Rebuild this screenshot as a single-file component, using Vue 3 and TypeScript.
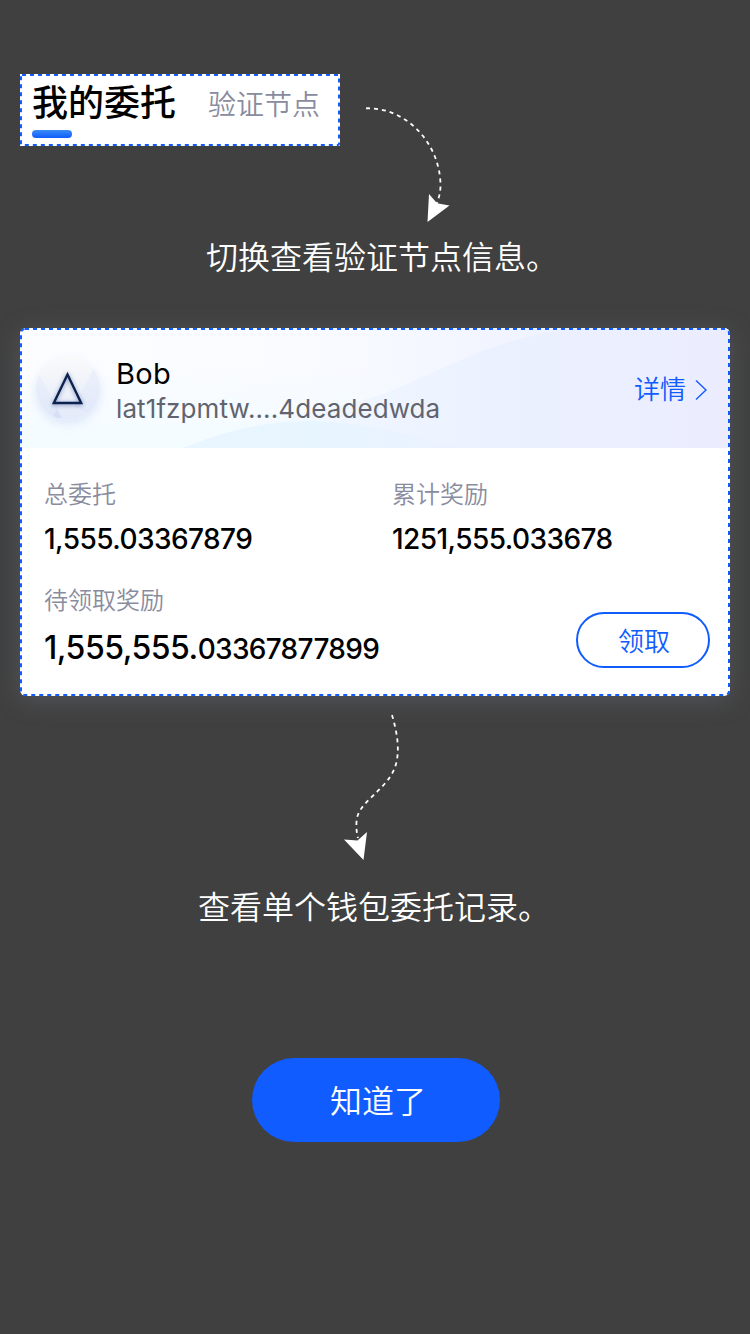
<script setup lang="ts">
interface Stat {
  label: string
  value: string
}

const tabs: string[] = ['我的委托', '验证节点']
const stats: Stat[] = [
  { label: '总委托', value: '1,555.03367879' },
  { label: '累计奖励', value: '1251,555.033678' },
]
const pending = { label: '待领取奖励', whole: '1,555,555.', fraction: '03367877899' }
</script>

<template>
  <main class="guide">
    <nav class="tabs">
      <div class="tab active">
        <span class="tab-text">{{ tabs[0] }}</span>
        <i class="bar"></i>
      </div>
      <div class="tab muted">{{ tabs[1] }}</div>
      <svg class="outline" viewBox="0 0 320 72">
        <rect x="1" y="1" width="318" height="70" rx="1" />
      </svg>
    </nav>

    <svg class="arrow arrow-top" viewBox="0 0 90 120">
      <path class="trail" d="M6 8.3C46 7 80 43 80.500 85C80.500 92 79 98 76.500 104" />
      <path class="head" d="M69 94L77 103.300L89.500 105.500L67.500 122Z" />
    </svg>
    <p class="tip tip-top">切换查看验证节点信息。</p>

    <section class="card">
      <header class="card-head">
        <svg class="wave" viewBox="0 0 710 120" preserveAspectRatio="none">
          <defs>
            <linearGradient id="base" x1="0" y1="0" x2="1" y2="0">
              <stop offset="0" stop-color="#fcfdff" />
              <stop offset="0.4" stop-color="#f9fbff" />
              <stop offset="0.8" stop-color="#eef2ff" />
              <stop offset="1" stop-color="#ebeeff" />
            </linearGradient>
            <linearGradient id="low" x1="0" y1="0" x2="0" y2="1">
              <stop offset="0.3" stop-color="#f3fbff" stop-opacity="0" />
              <stop offset="1" stop-color="#f3fcff" />
            </linearGradient>
            <linearGradient id="hill" gradientUnits="userSpaceOnUse" x1="200" y1="0" x2="710" y2="0">
              <stop offset="0" stop-color="#f1f8ff" stop-opacity="0" />
              <stop offset="0.25" stop-color="#f0f6ff" />
              <stop offset="0.6" stop-color="#ebf0ff" />
              <stop offset="1" stop-color="#ebedff" />
            </linearGradient>
            <linearGradient id="mound" gradientUnits="userSpaceOnUse" x1="163" y1="0" x2="440" y2="0">
              <stop offset="0" stop-color="#e9f6ff" />
              <stop offset="0.5" stop-color="#e7f5ff" />
              <stop offset="1" stop-color="#ebf2ff" />
            </linearGradient>
          </defs>
          <rect width="710" height="120" fill="url(#base)" />
          <rect width="400" height="120" fill="url(#low)" />
          <path d="M200 120V97C250 92 300 83 340 73C375 64 390 53 407 47C440 33 465 18 528 4L550 0H710V120Z" fill="url(#hill)" />
          <path d="M163 120C195 107 235 93 294 93C340 94 390 106 440 120Z" fill="url(#mound)" />
        </svg>
        <svg class="avatar" viewBox="0 0 64 64">
          <defs>
            <linearGradient id="disc" x1="0" y1="0" x2="0" y2="1">
              <stop offset="0" stop-color="#fafafa" />
              <stop offset="1" stop-color="#e3eafa" />
            </linearGradient>
            <linearGradient id="facet" x1="0" y1="0" x2="0" y2="1">
              <stop offset="0" stop-color="#eff2fb" />
              <stop offset="1" stop-color="#dfe7f9" />
            </linearGradient>
            <clipPath id="round"><circle cx="32" cy="32" r="32" /></clipPath>
          </defs>
          <g clip-path="url(#round)">
            <rect width="64" height="64" fill="url(#disc)" />
            <path d="M0 12L4 20L22 53L17 64H0ZM64 6L58 12L38 50L54 58L64 50Z" fill="url(#facet)" />
            <path d="M21 53L26 62H16Z" fill="#d5e0f8" />
          </g>
          <path class="delta" d="M31.500 18.500L45.200 47H17.800Z" />
        </svg>
        <div class="who">
          <strong>Bob</strong>
          <span>lat1fzpmtw....4deadedwda</span>
        </div>
        <a class="detail">
          <span>详情</span>
          <svg viewBox="0 0 14 22"><path d="M2 1.500L12 11L2 20.500" /></svg>
        </a>
      </header>

      <div class="stats">
        <dl v-for="s in stats" :key="s.label">
          <dt>{{ s.label }}</dt>
          <dd>{{ s.value }}</dd>
        </dl>
      </div>
      <div class="pending">
        <dl>
          <dt>{{ pending.label }}</dt>
          <dd><b>{{ pending.whole }}</b>{{ pending.fraction }}</dd>
        </dl>
        <button class="claim">领取</button>
      </div>
      <svg class="outline" viewBox="0 0 710 368">
        <rect x="1" y="1" width="708" height="366" rx="4" />
      </svg>
    </section>

    <svg class="arrow arrow-bottom" viewBox="0 0 60 150">
      <path class="trail" d="M52 5C57 22 60 39 56 54C49 80 17 91 16.500 112Q16 121 18 128" />
      <path class="head" d="M4 129.500L17.500 130.500L27 122L23.500 150Z" />
    </svg>
    <p class="tip tip-bottom">查看单个钱包委托记录。</p>
    <button class="ok">知道了</button>
  </main>
</template>

<style>
html,
body {
  margin: 0;
  background: #404040;
}
</style>

<style scoped>
.guide {
  box-sizing: border-box;
  width: 750px;
  height: 1334px;
  padding: 74px 20px 0;
  overflow: hidden;
  display: flex;
  flex-direction: column;
  align-items: flex-start;
  background: #404040;
  font-family: 'Noto Sans CJK SC', sans-serif;
  font-weight: 350;
}
.tabs {
  position: relative;
  box-sizing: border-box;
  width: 320px;
  height: 72px;
  padding: 0 12px;
  display: flex;
  gap: 32px;
  background: #fff;
}
.tab {
  white-space: nowrap;
}
.active {
  display: flex;
  flex-direction: column;
  width: 144px;
  color: #000;
  font-size: 36px;
  font-weight: 500;
  line-height: 52px;
}
.bar {
  width: 40px;
  height: 8px;
  margin-top: 4px;
  border-radius: 4px;
  background: linear-gradient(#3b8cf5, #105cfe);
}
.muted {
  color: #898c9e;
  font-size: 28px;
  line-height: 58px;
}
.outline {
  position: absolute;
  inset: 0;
  width: 100%;
  height: 100%;
  pointer-events: none;
}
.outline rect {
  fill: none;
  stroke: #105cfe;
  stroke-width: 2;
  stroke-dasharray: 4 4;
}
.arrow {
  overflow: visible;
}
.trail {
  fill: none;
  stroke: #fff;
  stroke-width: 1.8;
  stroke-dasharray: 4 4;
}
.head {
  fill: #fff;
}
.arrow-top {
  width: 90px;
  height: 120px;
  margin: -46px 0 0 340px;
}
.tip {
  margin: 0;
  color: #fff;
  font-size: 32px;
  line-height: 46px;
  white-space: nowrap;
}
.tip-top {
  margin: 12px 0 0 186px;
}
.card {
  position: relative;
  width: 710px;
  height: 368px;
  margin-top: 50px;
  border-radius: 6px;
  background: #fff;
  box-shadow: 0 4px 24px rgba(110, 114, 126, 0.42);
}
.card-head {
  position: relative;
  box-sizing: border-box;
  height: 120px;
  padding: 0 22px 0 16px;
  display: flex;
  align-items: center;
  border-radius: 6px 6px 0 0;
  overflow: hidden;
}
.wave {
  position: absolute;
  inset: 0;
  width: 100%;
  height: 100%;
}
.avatar {
  position: relative;
  width: 64px;
  height: 64px;
  border-radius: 50%;
  box-shadow: 0 4px 10px rgba(180, 200, 240, 0.4);
}
.delta {
  fill: none;
  stroke: #0c2350;
  stroke-width: 2.4;
  filter: drop-shadow(0 1px 2px rgba(20, 50, 120, 0.5));
}
.who {
  position: relative;
  display: flex;
  flex-direction: column;
  margin: 6px 0 0 16px;
  font-family: Inter, sans-serif;
}
.who strong {
  color: #000;
  font-size: 29px;
  font-weight: 400;
  line-height: 36px;
  letter-spacing: 0.3px;
}
.who span {
  color: #61646e;
  font-size: 26px;
  font-weight: 400;
  line-height: 34px;
  letter-spacing: 0.1px;
}
.detail {
  position: relative;
  margin-left: auto;
  display: flex;
  align-items: center;
  gap: 8px;
  color: #105cfe;
  font-size: 26px;
  line-height: 38px;
}
.detail svg {
  width: 14px;
  height: 22px;
  margin-top: 4px;
}
.detail path {
  fill: none;
  stroke: #105cfe;
  stroke-width: 1.4;
}
dl,
dd {
  margin: 0;
}
dt {
  color: #898c9e;
  font-size: 24px;
  line-height: 36px;
}
dd {
  color: #000;
  font-family: Inter, sans-serif;
  font-size: 28px;
  font-weight: 500;
  line-height: 36px;
  letter-spacing: -0.56px;
}
.stats {
  display: grid;
  grid-template-columns: 348px 1fr;
  padding: 27px 24px 0;
}
.stats dd {
  margin-top: 10px;
}
.pending {
  display: flex;
  justify-content: space-between;
  padding: 24px 20px 0 24px;
}
.pending dd {
  margin-top: 11px;
  line-height: 40px;
  letter-spacing: -0.7px;
}
.pending b {
  font-size: 32px;
  font-weight: 500;
  letter-spacing: -0.5px;
}
.claim {
  box-sizing: border-box;
  width: 134px;
  height: 56px;
  margin-top: 31px;
  padding: 0 0 2px 2px;
  border: 2px solid #105cfe;
  border-radius: 28px;
  background: #fff;
  color: #105cfe;
  font: inherit;
  font-size: 26px;
}
.arrow-bottom {
  width: 60px;
  height: 150px;
  margin: 14px 0 0 320px;
}
.tip-bottom {
  margin: 22px 0 0 178px;
}
.ok {
  width: 248px;
  height: 84px;
  margin: 130px 0 0 232px;
  padding: 0 0 2px 4px;
  border: 0;
  border-radius: 42px;
  background: #105cfe;
  color: #fff;
  font: inherit;
  font-size: 32px;
}
</style>
